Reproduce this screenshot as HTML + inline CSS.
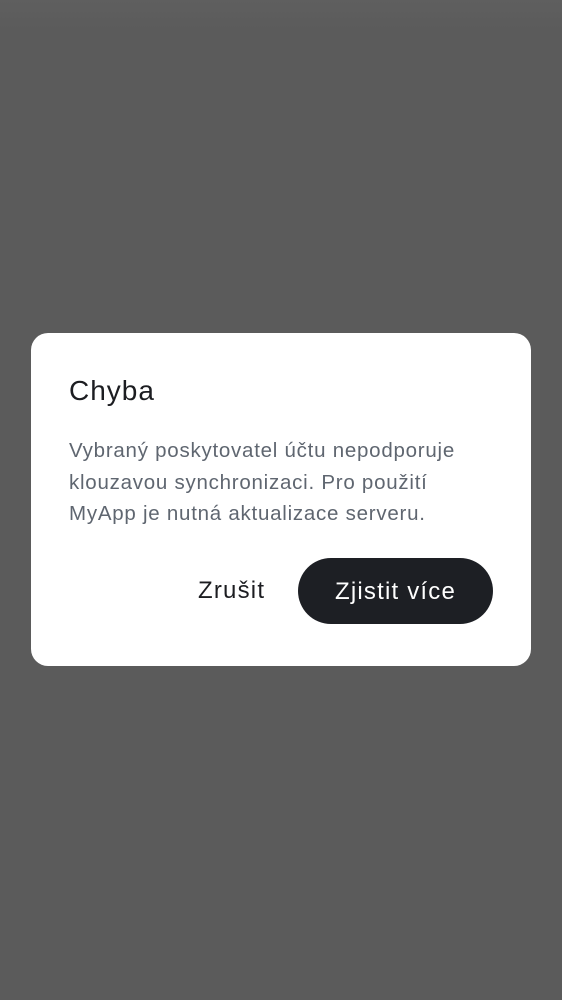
<!DOCTYPE html>
<html><head><meta charset="utf-8"><style>
html,body{margin:0;padding:0;width:562px;height:1000px;overflow:hidden;}
body{background:#5b5b5b;font-family:"Liberation Sans",sans-serif;position:relative;}
.top{position:absolute;left:0;top:0;width:562px;height:30px;background:linear-gradient(#5f5f5f,#5b5b5b);}
.d{position:absolute;left:31px;top:333px;width:500px;height:333px;background:#fff;border-radius:17px;}
.t{position:absolute;left:38px;top:42px;font-size:28px;color:#1c1d21;letter-spacing:1px;}
.b{position:absolute;left:38px;top:102px;width:405px;font-size:20.5px;line-height:31.5px;color:#5f6670;letter-spacing:0.75px;}
.c{position:absolute;left:167px;top:244px;font-size:24px;color:#1c1d21;letter-spacing:1.2px;}
.p{position:absolute;left:267px;top:225px;width:195px;height:66px;border-radius:33px;background:#1d1f24;color:#fff;font-size:24px;line-height:68px;text-align:center;letter-spacing:1.2px;}
</style></head><body>
<div class="top"></div>
<div class="d">
<div class="t">Chyba</div>
<div class="b">Vybraný poskytovatel účtu nepodporuje klouzavou synchronizaci. Pro použití MyApp je nutná aktualizace serveru.</div>
<div class="c">Zrušit</div>
<div class="p">Zjistit více</div>
</div>
</body></html>
